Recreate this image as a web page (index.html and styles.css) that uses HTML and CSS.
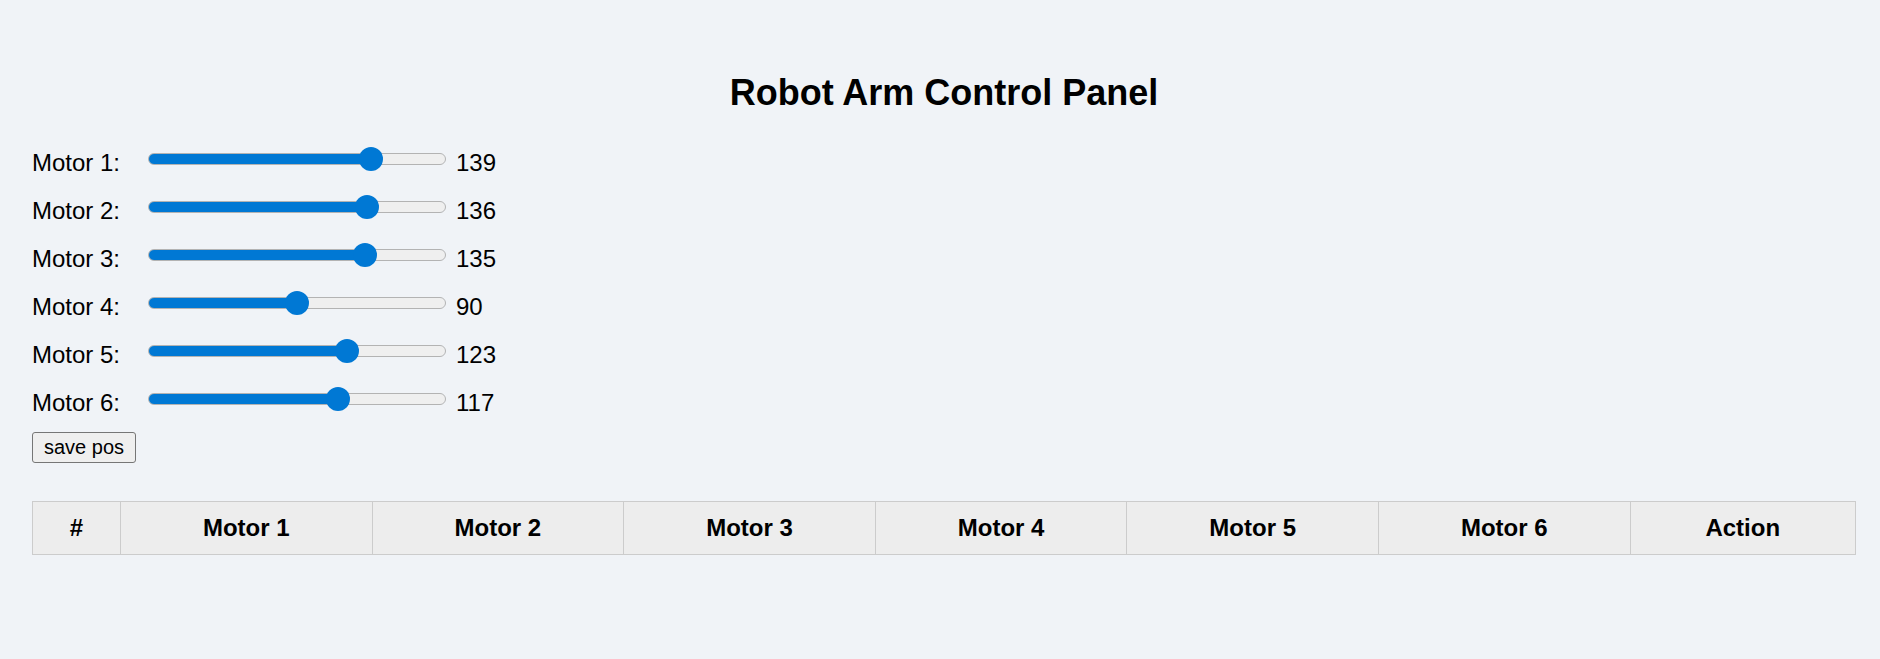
FILE: index.html
```html
<!DOCTYPE html>
<html lang="en">
<head>
<meta charset="utf-8">
<title>Robot Arm Control Panel</title>
<link rel="stylesheet" href="styles.css">
</head>
<body>
<div class="page">
  <h1 class="title">Robot Arm Control Panel</h1>
  <div class="rows">
    <div class="row"><label class="label" for="m1">Motor 1:</label><input class="slider" id="m1" type="range" min="0" max="180" value="139" style="--fill:223px"><span class="value">139</span></div>
    <div class="row"><label class="label" for="m2">Motor 2:</label><input class="slider" id="m2" type="range" min="0" max="180" value="136" style="--fill:218.5px"><span class="value">136</span></div>
    <div class="row"><label class="label" for="m3">Motor 3:</label><input class="slider" id="m3" type="range" min="0" max="180" value="135" style="--fill:217px"><span class="value">135</span></div>
    <div class="row"><label class="label" for="m4">Motor 4:</label><input class="slider" id="m4" type="range" min="0" max="180" value="90" style="--fill:149px"><span class="value">90</span></div>
    <div class="row"><label class="label" for="m5">Motor 5:</label><input class="slider" id="m5" type="range" min="0" max="180" value="123" style="--fill:199px"><span class="value">123</span></div>
    <div class="row"><label class="label" for="m6">Motor 6:</label><input class="slider" id="m6" type="range" min="0" max="180" value="117" style="--fill:190px"><span class="value">117</span></div>
  </div>
  <button class="save" type="button">save pos</button>
  <table class="positions">
    <thead>
      <tr>
        <th class="col-num">#</th>
        <th class="col-motor">Motor 1</th>
        <th class="col-motor">Motor 2</th>
        <th class="col-motor">Motor 3</th>
        <th class="col-motor">Motor 4</th>
        <th class="col-motor">Motor 5</th>
        <th class="col-motor">Motor 6</th>
        <th class="col-action">Action</th>
      </tr>
    </thead>
    <tbody></tbody>
  </table>
</div>
</body>
</html>
```

FILE: styles.css
```css
html, body {
  margin: 0;
  padding: 0;
  background: #f0f3f7;
}

body {
  font-family: "Liberation Sans", Arial, sans-serif;
  color: #000;
  font-size: 24px;
}

.page {
  padding: 72px 24px 40px 32px;
}

.title {
  margin: 0 0 35px;
  font-size: 36px;
  font-weight: bold;
  text-align: center;
  line-height: normal;
}

.rows {
  display: flex;
  flex-direction: column;
  gap: 20px;
}

.row {
  display: flex;
  align-items: center;
  height: 28px;
}

.label {
  flex: none;
  width: 116px;
  line-height: 28px;
}

.slider {
  -webkit-appearance: none;
  appearance: none;
  flex: none;
  width: 298px;
  height: 12px;
  margin: 0 0 8px;
  padding: 0;
  box-sizing: border-box;
  border: 1px solid #b3b3b3;
  border-radius: 6px;
  background:
    linear-gradient(to right, #0078d4 var(--fill), transparent var(--fill)) border-box,
    #efefef padding-box;
  outline: none;
}

.slider::-webkit-slider-thumb {
  -webkit-appearance: none;
  appearance: none;
  width: 24px;
  height: 24px;
  border: none;
  border-radius: 50%;
  background: #0078d4;
}

.value {
  margin-left: 10px;
  line-height: 28px;
}

.save {
  display: block;
  margin: 15px 0 0;
  padding: 3px 11px;
  font-family: "Liberation Sans", Arial, sans-serif;
  font-size: 20px;
  line-height: normal;
  color: #000;
  background: #efefef;
  border: 1px solid #767676;
  border-radius: 3px;
}

.positions {
  width: 100%;
  margin-top: 38px;
  border-collapse: collapse;
  border: 1px solid #cccccc;
}

.positions th {
  padding: 12px;
  background: #ededed;
  border: 1px solid #cccccc;
  font-size: 24px;
  font-weight: bold;
  text-align: center;
  line-height: normal;
}

.col-num {
  width: 63px;
}

.col-motor {
  width: 226.6px;
}
```
